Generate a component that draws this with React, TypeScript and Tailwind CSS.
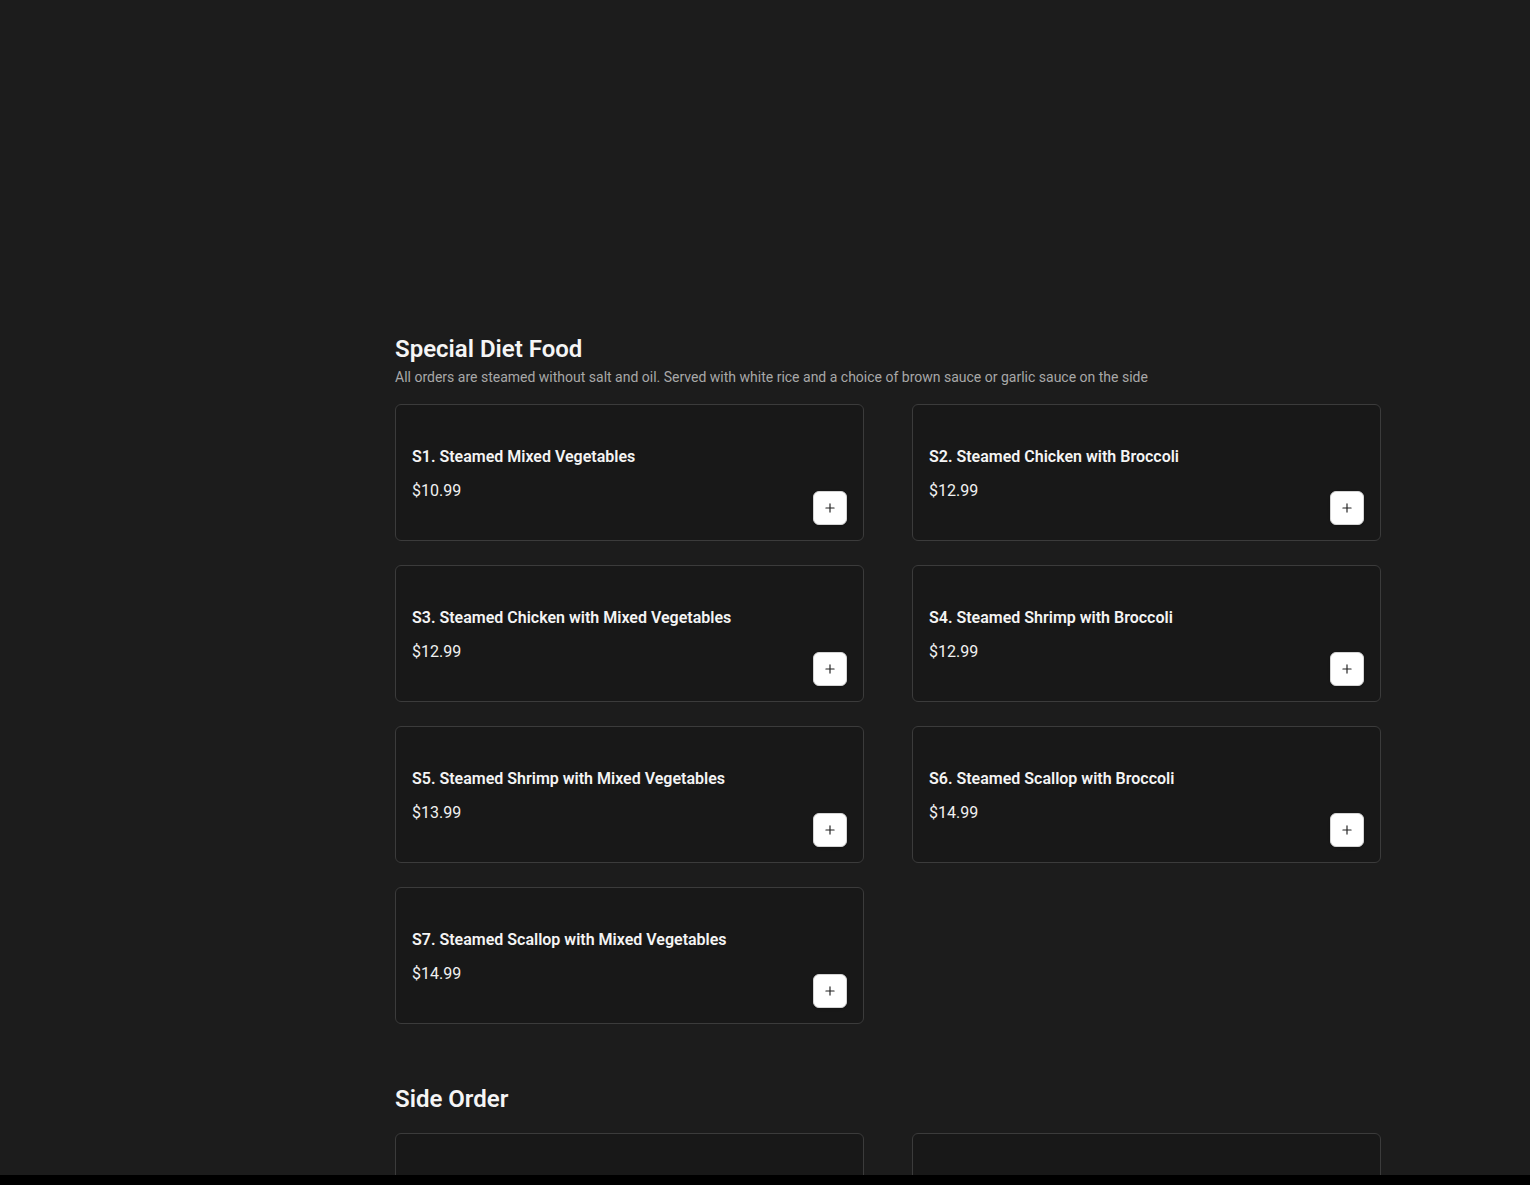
import { Plus } from 'lucide-react';

interface MenuItem {
  code: string;
  name: string;
  price: string;
}

const specialDiet: MenuItem[] = [
  { code: 'S1', name: 'Steamed Mixed Vegetables', price: '$10.99' },
  { code: 'S2', name: 'Steamed Chicken with Broccoli', price: '$12.99' },
  { code: 'S3', name: 'Steamed Chicken with Mixed Vegetables', price: '$12.99' },
  { code: 'S4', name: 'Steamed Shrimp with Broccoli', price: '$12.99' },
  { code: 'S5', name: 'Steamed Shrimp with Mixed Vegetables', price: '$13.99' },
  { code: 'S6', name: 'Steamed Scallop with Broccoli', price: '$14.99' },
  { code: 'S7', name: 'Steamed Scallop with Mixed Vegetables', price: '$14.99' },
];

function ItemCard({ item }: { item: MenuItem }) {
  return (
    <div className="h-[137px] rounded-md border border-[#3b3b3b] bg-[#181818] px-4 pb-[15px] flex justify-between">
      <div className="flex flex-col pt-[40px]">
        <h3 className="text-base leading-6 font-semibold text-[#f4f4f4]">
          {item.code}. {item.name}
        </h3>
        <p className="mt-[10px] text-base leading-6 text-[#f0f0f0]">{item.price}</p>
      </div>
      <button className="self-end w-[34px] h-[34px] rounded-md bg-white border border-[#d4d4d4] flex items-center justify-center shadow-sm">
        <Plus className="w-[14px] h-[14px] text-[#222]" strokeWidth={2} />
      </button>
    </div>
  );
}

export default function App() {
  return (
    <div
      className="min-h-screen bg-[#1c1c1c] text-white"
      style={{ fontFamily: 'Roboto, "Liberation Sans", sans-serif' }}
    >
      <main className="pl-[395px] pt-[334px] w-[1381px] pb-10">
        {/* Special Diet Food */}
        <section>
          <h2 className="text-2xl leading-[30px] font-semibold text-[#f5f5f5]">Special Diet Food</h2>
          <p className="mt-[3px] text-sm leading-5 text-[#a8a8a8]">
            All orders are steamed without salt and oil. Served with white rice and a choice of brown sauce or garlic sauce on the side
          </p>
          <div className="mt-[17px] grid grid-cols-2 gap-x-12 gap-y-6">
            {specialDiet.map((item) => (
              <ItemCard key={item.code} item={item} />
            ))}
          </div>
        </section>

        {/* Side Order */}
        <section className="mt-[60px]">
          <h2 className="text-2xl leading-[30px] font-semibold text-[#f5f5f5]">Side Order</h2>
          <div className="mt-[19px] grid grid-cols-2 gap-x-12 gap-y-6">
            <div className="h-[137px] rounded-md border border-[#3b3b3b] bg-[#181818]" />
            <div className="h-[137px] rounded-md border border-[#3b3b3b] bg-[#181818]" />
          </div>
        </section>
      </main>
      <div className="fixed bottom-0 left-0 right-0 h-[10px] bg-black" />
    </div>
  );
}
